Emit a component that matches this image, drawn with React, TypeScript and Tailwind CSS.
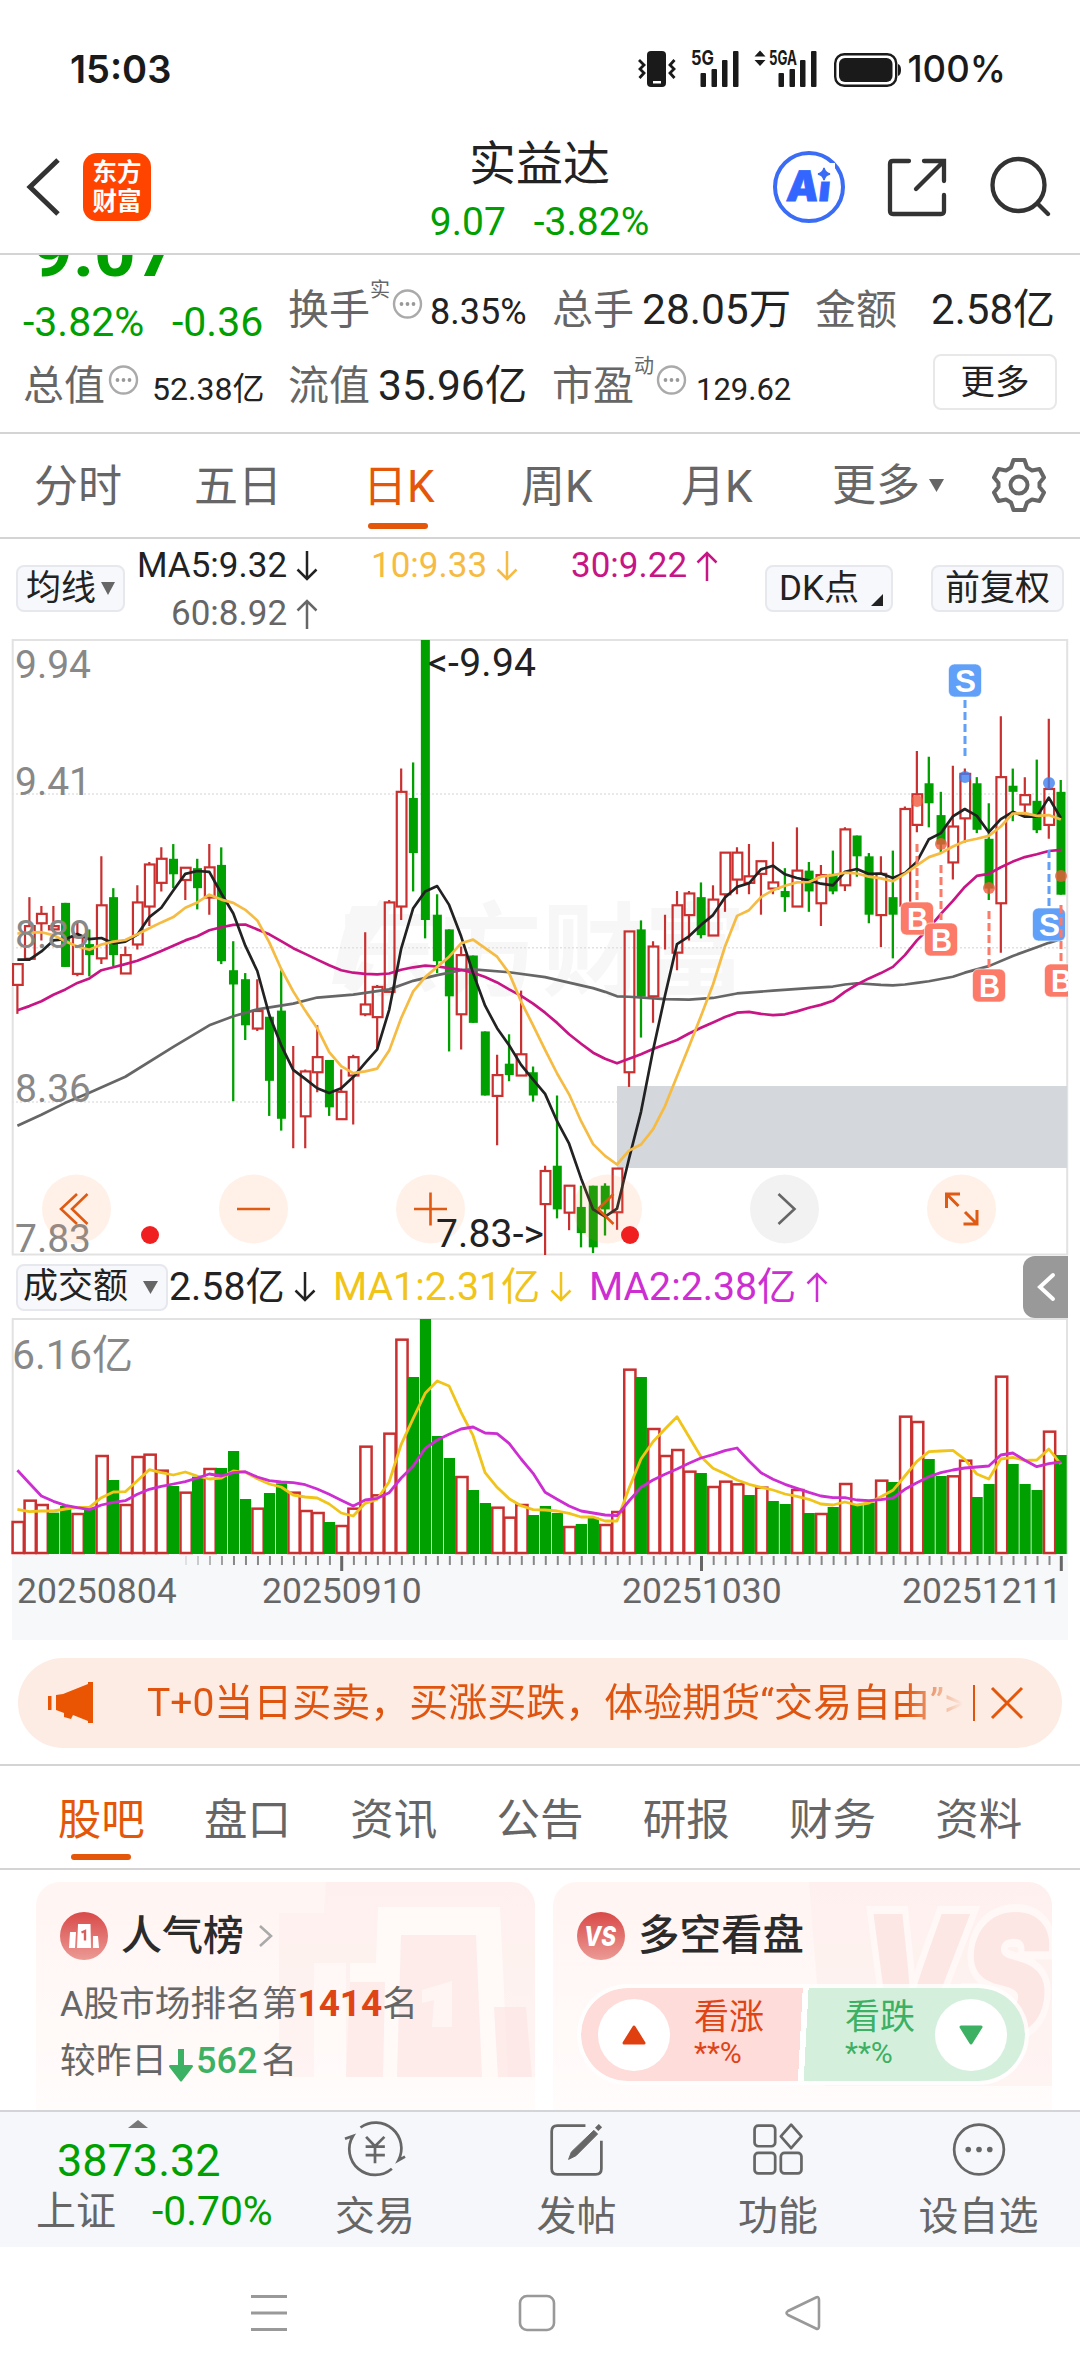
import type { ReactNode } from "react";

const UP = "#c93030";
const DOWN = "#00a000";
const FONT = "Roboto, 'Noto Sans CJK SC', sans-serif";

// [rising, high, body top, body bottom, low] in chart units: 24 is 9.94, 1531 is 7.83
const candles: number[][] = [
  [1, 818, 818, 869, 940], [1, 654, 725, 805, 805], [1, 676, 695, 718, 760], [1, 676, 725, 733, 740],
  [0, 668, 668, 825, 825], [1, 715, 752, 842, 848], [0, 733, 769, 796, 848], [1, 554, 674, 804, 818],
  [0, 632, 654, 796, 823], [1, 775, 796, 841, 841], [1, 625, 667, 770, 782], [1, 568, 574, 677, 725],
  [1, 532, 560, 619, 640], [0, 524, 560, 598, 632], [1, 580, 582, 612, 661], [0, 560, 583, 632, 684],
  [1, 524, 581, 655, 697], [0, 532, 575, 811, 818], [0, 762, 833, 868, 1154], [0, 840, 855, 968, 1004],
  [1, 855, 933, 976, 982], [0, 947, 947, 1104, 1190], [0, 833, 932, 1197, 1226], [1, 1019, 1176, 1176, 1269],
  [1, 1076, 1081, 1191, 1269], [1, 968, 1046, 1083, 1132], [0, 1053, 1053, 1169, 1190], [1, 1076, 1131, 1198, 1198],
  [1, 1040, 1046, 1091, 1211], [1, 740, 917, 941, 946], [1, 869, 874, 948, 1025], [1, 661, 667, 886, 886],
  [1, 339, 396, 677, 710], [0, 324, 411, 546, 640], [0, 24, 24, 710, 755], [0, 647, 697, 811, 840],
  [0, 733, 733, 897, 1032], [1, 775, 796, 941, 1027], [0, 797, 797, 962, 962], [0, 983, 983, 1140, 1140],
  [1, 1040, 1090, 1141, 1262], [0, 990, 1062, 1090, 1105], [1, 883, 1039, 1091, 1091], [0, 1069, 1083, 1140, 1155],
  [1, 1312, 1325, 1406, 1531], [0, 1140, 1312, 1419, 1441], [1, 1361, 1361, 1427, 1470], [0, 1361, 1413, 1477, 1512],
  [0, 1361, 1361, 1512, 1526], [0, 1355, 1361, 1419, 1483], [1, 1319, 1319, 1426, 1469], [1, 738, 738, 1083, 1119],
  [0, 711, 733, 898, 998], [1, 762, 775, 897, 962], [1, 697, 762, 762, 782], [1, 639, 674, 790, 833],
  [1, 639, 645, 698, 760], [0, 618, 654, 747, 755], [1, 625, 660, 748, 748], [1, 545, 545, 647, 690],
  [1, 532, 545, 611, 647], [1, 524, 603, 619, 647], [1, 566, 566, 597, 697], [1, 518, 618, 633, 647],
  [0, 583, 639, 654, 690], [1, 483, 589, 677, 677], [0, 568, 589, 640, 690], [1, 575, 600, 669, 725],
  [0, 540, 597, 640, 647], [1, 483, 488, 625, 639], [0, 503, 503, 554, 604], [0, 546, 554, 697, 718],
  [1, 554, 597, 698, 776], [0, 540, 654, 697, 804], [1, 432, 438, 675, 704], [1, 296, 402, 477, 495],
  [0, 310, 375, 424, 483], [0, 396, 453, 525, 546], [1, 332, 481, 569, 611], [1, 339, 352, 461, 520],
  [0, 360, 375, 489, 497], [0, 424, 511, 633, 661], [1, 211, 360, 669, 790], [0, 339, 381, 396, 468],
  [1, 360, 404, 427, 453], [0, 317, 418, 490, 497], [1, 217, 389, 477, 511], [0, 367, 396, 648, 648],
];

const ma5 = [
  807, 807, 787, 760, 757, 744, 757, 754, 767, 763, 746, 703, 680, 638, 597, 590, 592, 645, 694, 773, 835, 943,
  1017, 1077, 1099, 1122, 1134, 1122, 1095, 1060, 1027, 930, 780, 681, 640, 627, 673, 750, 840, 920, 975, 1017,
  1065, 1101, 1136, 1203, 1258, 1343, 1419, 1437, 1417, 1295, 1180, 1030, 895, 769, 750, 722, 698, 655, 629, 620,
  586, 577, 598, 607, 613, 621, 625, 592, 585, 597, 596, 607, 595, 567, 512, 497, 456, 438, 455, 495, 463, 445,
  457, 457, 410, 460,
];
const ma10 = [
  743, 741, 740, 747, 762, 775, 783, 770, 763, 759, 745, 730, 716, 703, 680, 667, 648, 660, 668, 685, 711, 765,
  830, 885, 932, 975, 1034, 1068, 1085, 1081, 1074, 1030, 950, 885, 850, 825, 800, 767, 758, 779, 800, 840, 910,
  968, 1028, 1086, 1137, 1203, 1259, 1288, 1309, 1275, 1260, 1223, 1166, 1093, 1020, 945, 868, 775, 700, 686, 654,
  637, 626, 618, 617, 604, 600, 594, 596, 604, 608, 615, 597, 576, 556, 546, 530, 517, 511, 504, 481, 449, 448,
  455, 453, 464,
];
const ma30 = [
  931, 921, 909, 893, 880, 864, 853, 833, 826, 818, 810, 798, 786, 773, 760, 750, 735, 728, 722, 721, 733, 745,
  762, 779, 793, 807, 821, 833, 839, 842, 843, 841, 832, 826, 822, 824, 828, 832, 839, 850, 863, 880, 896, 915,
  937, 962, 990, 1013, 1035, 1050, 1061, 1050, 1039, 1026, 1015, 1004, 988, 974, 961, 948, 937, 935, 940, 943,
  941, 934, 925, 918, 908, 886, 868, 853, 840, 825, 796, 760, 730, 695, 663, 629, 602, 597, 581, 567, 556, 549,
  541, 538,
];
// [day, value], the slow average barely bends
const ma60 = [
  [0, 1214], [2, 1187], [4, 1158], [6, 1133], [9, 1094], [13, 1021], [16, 968], [18, 946], [20, 929], [23, 915],
  [25, 900], [28, 893], [31, 880], [33, 859], [35, 845], [37, 833], [38, 831], [41, 838], [44, 850], [48, 877],
  [49, 886], [50, 897], [51, 898], [54, 904], [56, 905], [58, 901], [60, 890], [63, 883], [66, 877], [68, 873],
  [69, 868], [70, 865], [72, 869], [73, 870], [74, 868], [75, 864], [76, 860], [78, 849], [79, 839], [81, 823],
  [83, 798], [85, 777], [86, 766], [87, 757],
];

// [rising, bar top]: 207 is the 6.16亿 line, 910 the base line
const volumes: number[][] = [
  [1, 816], [1, 752], [1, 765], [0, 788], [0, 768], [1, 792], [0, 775], [1, 618], [0, 690], [1, 765], [1, 621],
  [1, 614], [1, 662], [0, 708], [1, 728], [0, 680], [1, 657], [0, 654], [0, 603], [0, 747], [1, 776], [0, 729],
  [0, 700], [1, 728], [1, 783], [1, 789], [0, 816], [1, 828], [1, 776], [1, 590], [1, 736], [1, 551], [1, 269],
  [0, 381], [0, 207], [0, 558], [0, 624], [1, 681], [0, 720], [0, 759], [1, 773], [1, 803], [1, 765], [0, 795],
  [0, 768], [0, 789], [1, 831], [0, 822], [0, 803], [1, 825], [1, 786], [1, 359], [0, 381], [1, 537], [1, 618],
  [1, 600], [1, 665], [0, 669], [1, 711], [1, 695], [1, 703], [0, 735], [1, 713], [0, 753], [0, 762], [1, 720],
  [0, 789], [1, 792], [0, 771], [1, 702], [0, 765], [0, 758], [1, 692], [0, 696], [1, 500], [1, 516], [0, 627],
  [0, 678], [1, 679], [1, 632], [0, 741], [0, 702], [1, 380], [0, 642], [0, 702], [0, 720], [1, 545], [0, 615],
];
const volMa1 = [
  778, 785, 783, 783, 777, 772, 772, 743, 726, 725, 692, 659, 668, 675, 666, 678, 687, 684, 663, 667, 686, 702,
  711, 735, 741, 744, 762, 789, 798, 760, 748, 695, 583, 505, 430, 393, 408, 487, 557, 668, 712, 746, 767, 779,
  780, 783, 790, 801, 801, 813, 813, 715, 627, 575, 537, 500, 560, 620, 655, 671, 690, 703, 712, 720, 732, 739,
  748, 762, 765, 756, 765, 759, 740, 721, 678, 634, 605, 603, 601, 628, 672, 687, 627, 622, 631, 630, 597, 642,
];
const volMa2 = [
  661, 700, 738, 754, 766, 773, 779, 765, 757, 752, 733, 718, 709, 702, 695, 684, 672, 678, 668, 665, 681, 692,
  696, 698, 704, 717, 733, 751, 768, 750, 745, 728, 684, 648, 595, 570, 553, 537, 531, 549, 551, 580, 627, 670,
  727, 748, 768, 783, 789, 795, 797, 753, 712, 690, 673, 657, 640, 624, 614, 602, 594, 633, 668, 688, 703, 715,
  727, 738, 743, 743, 750, 752, 749, 744, 718, 698, 680, 668, 660, 654, 651, 648, 615, 609, 631, 650, 641, 636,
];

const cx = (i: number) => 17.4 + i * 11.993;
const priceY = (v: number) => (v - 24) / 2.45 + 1;
const volY = (v: number) => (v - 207) / 3 + 1;
const toPoints = (values: number[], y: (v: number) => number) =>
  values.map((v, i) => `${cx(i).toFixed(1)},${y(v).toFixed(1)}`).join(" ");

function Arrow({ up = false, color, className = "" }: { up?: boolean; color: string; className?: string }) {
  return (
    <svg width="22" height="30" viewBox="0 0 22 30" className={`shrink-0 ${className}`}>
      <path
        d={up ? "M11 30V2M1.500 11.500L11 2L20.500 11.500" : "M11 0V28M1.500 18.500L11 28L20.500 18.500"}
        fill="none"
        stroke={color}
        strokeWidth="2.500"
      />
    </svg>
  );
}

function Caret({ w = 14, h = 13 }: { w?: number; h?: number }) {
  return (
    <svg width={w} height={h} viewBox="0 0 14 13" preserveAspectRatio="none" className="shrink-0">
      <path d="M0 0H14L7 13Z" fill="#666" />
    </svg>
  );
}

function InfoDots() {
  return (
    <svg width="31" height="30" viewBox="0 0 31 30" className="shrink-0 self-start mt-[9px]">
      <circle cx="15.500" cy="15" r="13.500" fill="none" stroke="#aaa" strokeWidth="2.400" />
      <circle cx="9.500" cy="15" r="1.900" fill="#999" />
      <circle cx="15.500" cy="15" r="1.900" fill="#999" />
      <circle cx="21.500" cy="15" r="1.900" fill="#999" />
    </svg>
  );
}

function StatusBar() {
  const bars = [
    [0, 22], [11, 18], [21.5, 9], [32.5, 0],
  ];
  return (
    <div className="h-[137px] flex items-center pl-[70px] pr-[74px] pt-[1px] font-['Inter',sans-serif] font-semibold text-[38px] text-[#1a1a1a]">
      <span className="flex-1">15:03</span>
      <svg width="270" height="40" viewBox="636 49 270 40" fill="#1a1a1a">
        <rect x="647" y="51" width="19" height="36" rx="4" />
        <rect x="653" y="81" width="8" height="2.500" fill="#fff" />
        <path d="M639 60L644 65L640 69L644 73L639.500 78M674.500 60L670 65L674 69L670 73L674.500 78" fill="none" stroke="#1a1a1a" strokeWidth="2.800" />
        <text x="691" y="65" fontSize="20" fontWeight="700" textLength="23" lengthAdjust="spacingAndGlyphs">5G</text>
        {bars.map(([x, y]) => (
          <rect key={x} x={700.5 + x} y={51 + y} width="5.500" height={36 - y} rx="1" />
        ))}
        <path d="M760 50.500L765.500 56.500H754.500ZM760 66L765.500 60H754.500Z" />
        <text x="769" y="65" fontSize="20" fontWeight="700" textLength="28" lengthAdjust="spacingAndGlyphs">5GA</text>
        {bars.map(([x, y]) => (
          <rect key={x} x={778.5 + x} y={51 + y} width="5.500" height={36 - y} rx="1" />
        ))}
        <rect x="835.200" y="54.200" width="61" height="31.600" rx="9" fill="none" stroke="#1a1a1a" strokeWidth="2.400" />
        <rect x="839" y="58" width="53.500" height="24" rx="6" />
        <path d="M898 64Q901 65 901 70Q901 75 898 76Z" />
      </svg>
      <span className="text-[36.500px] font-medium ml-[1px]">100%</span>
    </div>
  );
}

function Header() {
  return (
    <header className="h-[118px] border-b-2 border-[#d4d4d4] flex items-center">
      <svg width="36" height="60" viewBox="0 0 36 60" className="ml-[25px] mt-[-16px]">
        <path d="M33 3L5 30L33 57" fill="none" stroke="#333" strokeWidth="5" />
      </svg>
      <div className="ml-[22px] mt-[-16px] size-[68px] rounded-[14px] bg-[#ff4400] text-white font-bold text-[24.500px] leading-[29px] flex flex-col items-center justify-center">
        <span>东方</span>
        <span>财富</span>
      </div>
      <div className="flex-1 self-stretch text-center pl-[156px]">
        <h1 className="pt-[1px] text-[47px] leading-[52px] text-[#222]">实益达</h1>
        <div className="mt-[2px] text-[39px] leading-[60px] text-[#00a000] flex justify-center">
          <span>9.07</span>
          <span className="ml-[28px]">-3.82%</span>
        </div>
      </div>
      <div className="flex items-center mt-[-16px] mr-[29px]">
        <svg width="74" height="74" viewBox="772 150 74 74">
          <circle cx="809" cy="187" r="34" fill="none" stroke="#3a6cf5" strokeWidth="4" />
          <g transform="translate(785.500 201) skewX(-6)" fontFamily="Inter, sans-serif" fontWeight="900" fontSize="42" fill="#3366ff" stroke="#3366ff" strokeWidth="0.800">
            <text textLength="44" lengthAdjust="spacingAndGlyphs">Ai</text>
          </g>
          <rect x="816" y="163" width="19" height="18.500" fill="#fff" />
          <path d="M824 168Q825 173 830 174Q825 175 824 180Q823 175 818 174Q823 173 824 168Z" fill="#3a6cf5" stroke="#3a6cf5" strokeWidth="1.500" />
        </svg>
        <svg width="62" height="62" viewBox="0 0 62 62" className="ml-[39px]" fill="none" stroke="#333" strokeWidth="4.300" strokeLinecap="round">
          <path d="M24 5H8Q5 5 5 8V55Q5 58 8 58H56Q59 58 59 55V39" />
          <path d="M39 5H59V25M58 6L31 33" />
        </svg>
        <svg width="62" height="62" viewBox="0 0 62 62" className="ml-[42px]" fill="none" stroke="#333" strokeWidth="4.300" strokeLinecap="round">
          <circle cx="29.500" cy="29" r="26" />
          <path d="M49 48L59 58" />
        </svg>
      </div>
    </header>
  );
}

function Quote() {
  return (
    <section className="h-[179px] border-b-2 border-[#d4d4d4] overflow-hidden text-[41px] leading-[60px] text-[#222]">
      <div className="flex h-[101px] pl-[23px]">
        <div className="w-[265px] mt-[-34px] text-[#00a000]">
          <div className="h-[71px] pl-[8px] text-[73px] font-bold">9.07</div>
          <div className="text-[41px] flex">
            <span className="w-[149px]">-3.82%</span>
            <span>-0.36</span>
          </div>
        </div>
        <div className="w-[264px] pt-[25px] flex items-baseline">
          <span className="text-[#666]">换手</span>
          <span className="text-[#666] text-[20px] leading-[20px] self-start mr-[2px]">实</span>
          <InfoDots />
          <span className="ml-[7px] text-[36px]">8.35%</span>
        </div>
        <div className="w-[263px] pt-[25px] flex items-baseline">
          <span className="text-[#666]">总手</span>
          <span className="ml-[8px] text-[42.500px]">28.05万</span>
        </div>
        <div className="w-[240px] pt-[25px] flex items-baseline justify-between">
          <span className="text-[#666]">金额</span>
          <span className="text-[42px]">2.58亿</span>
        </div>
      </div>
      <div className="flex h-[60px] pl-[23px]">
        <div className="w-[265px] flex items-baseline">
          <span className="text-[#666]">总值</span>
          <span className="flex self-start ml-[3px]"><InfoDots /></span>
          <span className="ml-[13px] text-[32px]">52.38亿</span>
        </div>
        <div className="w-[264px] flex items-baseline">
          <span className="text-[#666]">流值</span>
          <span className="ml-[8px] text-[42.500px]">35.96亿</span>
        </div>
        <div className="w-[381px] flex items-baseline">
          <span className="text-[#666]">市盈</span>
          <span className="text-[#666] text-[20px] leading-[20px] self-start mr-[2px]">动</span>
          <InfoDots />
          <span className="ml-[9px] text-[31px]">129.62</span>
        </div>
        <button className="w-[124px] h-[56px] border-2 border-[#e8e8e8] rounded-[8px] text-[34.500px] leading-[50px] mt-[-2px]">更多</button>
      </div>
    </section>
  );
}

function PeriodTabs() {
  const tabs = [
    ["分时", "w-[160px]"],
    ["五日", "w-[169px]"],
    ["日K", "w-[158px] text-[#e4570b]"],
    ["周K", "w-[160px]"],
    ["月K", "w-[151px]"],
  ];
  return (
    <nav className="h-[105px] border-b-2 border-[#d4d4d4] flex text-[44px] leading-[106px] text-[#666] pl-[34px]">
      {tabs.map(([label, className]) => (
        <div key={label} className={className}>
          {label}
          {label === "日K" && <div className="w-[60px] h-[6px] rounded-full bg-[#e4570b] mt-[-17px] ml-[5px]" />}
        </div>
      ))}
      <div className="flex items-center w-[156px]">
        <span className="mr-[9px]">更多</span>
        <Caret w={15} />
      </div>
      <svg width="56" height="56" viewBox="0 0 56 56" className="self-center ml-[3px] mt-[-1px]">
        <path
          d="M22.500 3H33.500L36 10.500L41 13.500L48.500 12L53 20.500L48.500 26V30L53 35.500L48.500 44L41 42.500L36 45.500L33.500 53H22.500L20 45.500L15 42.500L7.500 44L3 35.500L7.500 30V26L3 20.500L7.500 12L15 13.500L20 10.500Z"
          fill="none"
          stroke="#666"
          strokeWidth="4"
          strokeLinejoin="round"
        />
        <circle cx="28" cy="28" r="8.500" fill="none" stroke="#666" strokeWidth="4" />
      </svg>
    </nav>
  );
}

function ChipButton({ className, children }: { className: string; children: ReactNode }) {
  return (
    <button className={`h-[47px] rounded-[8px] border-2 border-[#e6e8ee] bg-[#f7f8fb] text-[35px] leading-[42px] text-[#222] flex items-center shrink-0 ${className}`}>
      {children}
    </button>
  );
}

function MaRow() {
  return (
    <div className="h-[100px] flex pl-[16px] pr-[15px] text-[35px]">
      <ChipButton className="w-[109px] mt-[26px] pl-[8px] gap-[5px]">
        均线
        <Caret />
      </ChipButton>
      <div className="ml-[12px] w-[628px] leading-[48px] pt-[3px]">
        <div className="flex items-center">
          <span className="w-[159px] text-[#222]">MA5:9.32</span>
          <Arrow color="#222" />
          <span className="ml-[53px] w-[125px] text-[#f6bb42]">10:9.33</span>
          <Arrow color="#f6bb42" />
          <span className="ml-[53px] w-[125px] text-[#c71585]">30:9.22</span>
          <Arrow up color="#c71585" />
        </div>
        <div className="flex items-center text-[#666]">
          <span className="w-[159px] pl-[34px]">60:8.92</span>
          <Arrow up color="#666" />
        </div>
      </div>
      <ChipButton className="w-[128px] mt-[26px] pl-[12px]">
        DK点
        <svg width="12" height="12" viewBox="0 0 12 12" className="self-end mb-[4px] ml-[12px]">
          <path d="M12 0V12H0Z" fill="#222" />
        </svg>
      </ChipButton>
      <ChipButton className="w-[133px] mt-[26px] ml-[38px] justify-center">前复权</ChipButton>
    </div>
  );
}

// [letter, center x, top of the box, dash start, dash end]
const marks: [string, number, number, number, number][] = [
  ["S", 965, 664, 700, 757],
  ["B", 917, 902, 844, 900],
  ["B", 941, 923, 865, 920],
  ["B", 989, 969, 911, 967],
  ["S", 1049, 908, 850, 906],
  ["B", 1061, 964, 905, 961],
];
const markDots: [string, number, number][] = [
  ["#3d7ff0", 965, 777], ["#3d7ff0", 1049, 783],
  ["#f05a3c", 917, 801], ["#f05a3c", 941, 844], ["#f05a3c", 989, 888], ["#f05a3c", 1061, 876],
];

function PriceChart() {
  return (
    <svg width="1080" height="617" viewBox="0 0 1080 617" fontFamily={FONT} className="block">
      <defs>
        <clipPath id="plot">
          <rect x="12" y="0" width="1056" height="617" />
        </clipPath>
      </defs>
      <g fill="#f7f7f7" fontSize="102" fontWeight="700">
        <path d="M352 267Q340 300 332 345H352Q362 300 385 267Z" />
        <text x="338" y="349">东方财富</text>
      </g>
      {[401, 778, 1156].map((v) => (
        <path key={v} d={`M12 ${priceY(v)}H1068`} stroke="#e2e2e2" strokeWidth="1.500" strokeDasharray="2 2" />
      ))}
      <rect x="12.700" y="1" width="1054.500" height="614.500" fill="none" stroke="#e2e2e2" strokeWidth="2" />
      <rect x="617" y="447" width="450" height="82" fill="#d4d8dd" />

      <g clipPath="url(#plot)">
        {candles.map(([up, high, top, bottom, low], i) => {
          const x = cx(i);
          const color = up ? UP : DOWN;
          if (!up) {
            return (
              <g key={i} fill={color}>
                <rect x={x - 1.2} y={priceY(high)} width="2.300" height={priceY(low) - priceY(high)} />
                <rect x={x - 4.3} y={priceY(top)} width="9" height={priceY(bottom) - priceY(top)} />
              </g>
            );
          }
          return (
            <g key={i} stroke={color} strokeWidth="2.200" fill="none">
              <path d={`M${x} ${priceY(high)}V${priceY(top)}M${x} ${priceY(bottom)}V${priceY(low)}`} />
              <rect x={x - 4.4} y={priceY(top)} width="9.700" height={priceY(bottom) - priceY(top)} />
            </g>
          );
        })}
        <g fill="none" strokeWidth="2.700" strokeLinejoin="round">
          <polyline points={ma60.map(([i, v]) => `${cx(i)},${priceY(v)}`).join(" ")} stroke="#666" />
          <polyline points={toPoints(ma30, priceY)} stroke="#c71585" />
          <polyline points={toPoints(ma5, priceY)} stroke="#222" />
          <polyline points={toPoints(ma10, priceY)} stroke="#f6bb42" />
        </g>
        <g transform="translate(0 -639)">
          {markDots.map(([color, x, y]) => (
            <circle key={`${x}-${y}`} cx={x} cy={y} r="6" fill={color} opacity="0.8" />
          ))}
          {marks.map(([letter, x, top, from, to]) => {
            const color = letter === "S" ? "#60a0f8" : "#fb7b68";
            return (
              <g key={x}>
                <path d={`M${x} ${from}V${to}`} stroke={color} strokeWidth="3" strokeDasharray="8 4" />
                <rect x={x - 16.5} y={top} width="33" height="33" rx="6" fill={color} stroke="#fff" strokeOpacity="0.6" />
                <text x={x - 10} y={top + 27.5} fontSize="31" fontWeight="700" fontFamily="Liberation Sans, sans-serif" fill="#fff" textLength="21" lengthAdjust="spacingAndGlyphs">
                  {letter}
                </text>
              </g>
            );
          })}
        </g>
      </g>

      <g fontSize="39" fill="#888">
        <text x="15" y="39">9.94</text>
        <text x="15" y="156">9.41</text>
        <text x="15" y="309">8.89</text>
        <text x="15" y="463">8.36</text>
        <text x="15" y="613">7.83</text>
      </g>

      <g transform="translate(0 570)">
        {[76.5, 253.5, 430.5, 607.5, 961.5].map((x) => (
          <circle key={x} cx={x} cy="0" r="34.500" fill="#ff8a50" fillOpacity="0.13" />
        ))}
        <circle cx="784.500" cy="0" r="34.500" fill="#f2f2f2" />
        <g fill="none" stroke="#df5a12" strokeWidth="2.600">
          <path d="M77 -15L61 0L77 15M87.500 -15L72 0L87.500 15" />
          <path d="M237 0H270" />
          <path d="M414 0H447M430.500 -16.500V16.500" />
          <path d="M613.500 -15L598 0L613.500 15" />
          <path d="M960 -15H946.500V-1M946.500 -15L958.500 -3M963.500 15H977V1M977 15L965 3" strokeWidth="3" />
        </g>
        <path d="M778.500 -15L794.500 0L778.500 15" fill="none" stroke="#666" strokeWidth="2.600" />
        <circle cx="150" cy="26" r="9" fill="#f02020" />
        <circle cx="630" cy="26" r="9" fill="#f02020" />
      </g>
      <g fontSize="39" fill="#222">
        <text x="428" y="37" textLength="108">&lt;-9.94</text>
        <text x="436" y="608" textLength="108">7.83-&gt;</text>
      </g>
    </svg>
  );
}

function VolumeRow() {
  return (
    <div className="h-[62px] flex items-center pl-[16px] pr-[12px] text-[39.200px] leading-[60px]">
      <ChipButton className="w-[152px] pl-[5px] gap-[15px]">
        成交额
        <Caret w={15} />
      </ChipButton>
      <span className="ml-[1px] w-[125px] whitespace-nowrap text-[#222]">2.58亿</span>
      <Arrow color="#222" />
      <span className="ml-[17px] w-[217px] whitespace-nowrap text-[#f0c419]">MA1:2.31亿</span>
      <Arrow color="#f0c419" />
      <span className="ml-[17px] w-[217px] whitespace-nowrap text-[#cc2ed1]">MA2:2.38亿</span>
      <Arrow up color="#cc2ed1" />
      <div className="ml-auto w-[45px] h-[62px] rounded-l-[12px] bg-[#999] flex items-center justify-center">
        <svg width="20" height="30" viewBox="0 0 20 30">
          <path d="M17 3L4 15L17 27" fill="none" stroke="#fff" strokeWidth="4" strokeLinecap="round" />
        </svg>
      </div>
    </div>
  );
}

function VolumeChart() {
  return (
    <svg width="1080" height="322" viewBox="0 0 1080 322" fontFamily={FONT} className="block">
      <rect x="12" y="236" width="1056" height="86" fill="#f7f8fa" />
      <path d="M12.700 236V1H1067V236" fill="none" stroke="#e2e2e2" strokeWidth="2" />
      <text x="12" y="50.500" fontSize="41" fill="#888">6.16亿</text>
      {volumes.map(([up, top], i) => {
        const x = cx(i);
        return up ? (
          <rect key={i} x={x - 4.8} y={volY(top)} width="11.200" height={235 - volY(top)} fill="#fff" stroke={UP} strokeWidth="2.500" />
        ) : (
          <rect key={i} x={x - 5.3} y={volY(top)} width="11.200" height={236 - volY(top)} fill={DOWN} />
        );
      })}
      <g fill="none" strokeWidth="2.800" strokeLinejoin="round">
        <polyline points={toPoints(volMa1, volY)} stroke="#f0c419" />
        <polyline points={toPoints(volMa2, volY)} stroke="#cc2ed1" />
      </g>
      {volumes.map((_, i) => {
        if (i < 14) return null;
        const major = i === 27 || i === 57 || i === 87;
        return (
          <rect
            key={i}
            x={cx(i) - (major ? 1 : 0.3)}
            y="238"
            width={major ? 3 : 2}
            height={major ? 15 : 9}
            fill={major ? "#666" : "#888"}
            opacity={Math.min(1, (i - 13) / 5)}
          />
        );
      })}
      <g fontSize="35.500" fill="#666">
        <text x="17" y="285">20250804</text>
        <text x="262" y="285">20250910</text>
        <text x="622" y="285">20251030</text>
        <text x="902" y="285">20251211</text>
      </g>
    </svg>
  );
}

function Notice() {
  return (
    <div className="h-[126px] pt-[18px] px-[18px] border-b-2 border-[#d4d4d4]">
      <div className="h-[90px] rounded-full bg-[#fdece3] flex items-center text-[#df5510]">
        <svg width="46" height="42" viewBox="0 0 46 42" className="ml-[29px] shrink-0">
          <path d="M1 14H4.500V28H1ZM9 13L16 12L41 2V0H46V41H41V39L26 33L24 37L17 35V31L9 28Z" fill="#ea5504" />
        </svg>
        <div className="ml-[54px] w-[816px] overflow-hidden whitespace-nowrap text-[39px] leading-[60px] mask-r-from-93% mask-r-to-100%">
          T+0当日买卖，买涨买跌，体验期货“交易自由”&gt;
        </div>
        <div className="ml-[10px] w-[2px] h-[36px] bg-[#df5510]" />
        <svg width="34" height="34" viewBox="0 0 34 34" className="ml-[15px]">
          <path d="M2 2L32 32M32 2L2 32" stroke="#e4570b" strokeWidth="3" />
        </svg>
      </div>
    </div>
  );
}

function SectionTabs() {
  const tabs = ["股吧", "盘口", "资讯", "公告", "研报", "财务", "资料"];
  return (
    <nav className="h-[104px] border-b-2 border-[#d4d4d4] grid grid-cols-7 px-[28px] text-[43.500px] leading-[109px] text-center text-[#666]">
      {tabs.map((t, i) => (
        <div key={t} className={i === 0 ? "text-[#e4570b]" : ""}>
          {t}
          {i === 0 && <div className="w-[60px] h-[6px] mx-auto mt-[-21px] rounded-full bg-[#e4570b]" />}
        </div>
      ))}
    </nav>
  );
}

function RankCard() {
  return (
    <div className="relative w-[499px] h-[260px] rounded-t-[24px] overflow-hidden bg-linear-to-b from-[#fff5f3] to-[#fffdfc] text-[#666]">
      <svg width="499" height="228" viewBox="0 0 499 228" className="absolute inset-0">
        <path d="M290 0H499V195H310V81H278V195H243V31H288Z" fill="#fdebe9" opacity="0.450" />
        <path d="M342 25H464L472 195H310L314 100V81H340Z" fill="#fffaf8" />
        <path d="M365 53H440L446 195H361ZM314 100H349L347 195H310ZM458 125H490L496 195H462Z" fill="#fce6e4" opacity="0.700" />
        <path d="M386 108L416 99V145H396L398 118L386 121Z" fill="#fff6f4" />
      </svg>
      <div className="relative pl-[24px]">
        <div className="flex items-center pt-[24px] leading-[60px]">
          <svg width="48" height="48" viewBox="0 0 48 48">
            <defs>
              <linearGradient id="badge" x1="0" y1="0" x2="0" y2="1">
                <stop offset="0" stopColor="#d84a48" />
                <stop offset="1" stopColor="#ec9a95" />
              </linearGradient>
            </defs>
            <circle cx="24" cy="24" r="24" fill="url(#badge)" />
            <path d="M18 12H30.500L31 36H17ZM10 20H16L15 36H9ZM33 24H38L39 36H33Z" fill="#fff" />
            <path d="M21.500 20.500L25 19V28.500" fill="none" stroke="#d8605c" strokeWidth="2.400" />
          </svg>
          <span className="ml-[13px] text-[41px] font-medium text-[#2b2b2b]">人气榜</span>
          <svg width="16" height="24" viewBox="0 0 16 24" className="ml-[14px]">
            <path d="M2 2L13 12L2 22" fill="none" stroke="#aaa" strokeWidth="2.600" />
          </svg>
        </div>
        <div className="mt-[10px] text-[35.700px] leading-[56px]">
          A股市场排名第<span className="font-bold text-[37px] text-[#df4416]">1414</span>名
        </div>
        <div className="flex items-center text-[35.700px] leading-[58px]">
          较昨日
          <svg width="26" height="34" viewBox="0 0 26 34" className="ml-[1px] mt-[7px]">
            <path d="M10 1H16V17H24Q26 18 24 20L14 33Q13 34 12 33L2 20Q0 18 2 17H10Z" fill="#3cb063" />
          </svg>
          <span className="ml-[2px] mr-[4px] font-medium text-[36px] text-[#3cb063]">562</span>名
        </div>
      </div>
    </div>
  );
}

function VoteCard() {
  return (
    <div className="relative w-[499px] h-[260px] rounded-t-[24px] overflow-hidden bg-linear-to-b from-[#fff5f3] to-[#fffdfc]">
      <svg width="499" height="228" viewBox="0 0 499 228" className="absolute inset-0">
        <path d="M256 0H499V204H272Z" fill="#fdeae8" opacity="0.450" />
        <text x="308" y="152" fontFamily="Inter, sans-serif" fontStyle="italic" fontWeight="900" fontSize="165" fill="#fce7e4" stroke="#fff8f6" strokeWidth="16" paintOrder="stroke" textLength="188" lengthAdjust="spacingAndGlyphs">VS</text>
      </svg>
      <div className="relative">
        <div className="flex items-center pt-[24px] pl-[24px] leading-[60px]">
          <svg width="48" height="48" viewBox="0 0 48 48">
            <circle cx="24" cy="24" r="24" fill="url(#badge)" />
            <text x="23" y="34" fontFamily="Inter, sans-serif" fontStyle="italic" fontWeight="800" fontSize="27" fill="#fff" textAnchor="middle" textLength="32" lengthAdjust="spacingAndGlyphs">VS</text>
          </svg>
          <span className="ml-[13px] text-[41.500px] font-medium text-[#2b2b2b]">多空看盘</span>
        </div>
        <div className="ml-[24px] mt-[18px] w-[452px] h-[101px] rounded-full border-4 border-white/80 bg-[linear-gradient(93deg,#fddcd9_49.4%,#fff_49.4%,#fff_50.7%,#d5efdd_50.7%)] bg-clip-padding flex items-center">
          <div className="ml-[17px] size-[72px] rounded-full bg-white flex items-center justify-center">
            <svg width="24" height="20" viewBox="0 0 24 20">
              <path d="M12 2L22 18H2Z" fill="#e04010" stroke="#e04010" strokeWidth="3" strokeLinejoin="round" />
            </svg>
          </div>
          <div className="ml-[24px] text-[#df4416] text-[35px] leading-[37px]">
            <div>看涨</div>
            <div className="text-[30px] leading-[34px]">**%</div>
          </div>
          <div className="ml-[81px] text-[#3cb063] text-[35px] leading-[37px]">
            <div>看跌</div>
            <div className="text-[30px] leading-[34px]">**%</div>
          </div>
          <div className="ml-[20px] size-[72px] rounded-full bg-white flex items-center justify-center">
            <svg width="24" height="20" viewBox="0 0 24 20">
              <path d="M12 18L22 2H2Z" fill="#3cb063" stroke="#3cb063" strokeWidth="3" strokeLinejoin="round" />
            </svg>
          </div>
        </div>
      </div>
    </div>
  );
}

function Action({ label, className, children }: { label: string; className: string; children: ReactNode }) {
  return (
    <div className={`flex flex-col items-center pt-[8px] ${className}`}>
      <svg width="66" height="64" viewBox="0 0 66 64" fill="none" stroke="#666" strokeWidth="2.900">
        {children}
      </svg>
      <span className="mt-[7px] leading-[60px] whitespace-nowrap">{label}</span>
    </div>
  );
}

function BottomBar() {
  return (
    <footer className="h-[137px] border-t-2 border-[#d2d4d8] bg-[#f6f7fa] flex text-[40px] text-[#666]">
      <div className="w-[275px] pt-[8px]">
        <svg width="20" height="8" viewBox="0 0 20 8" className="ml-[128px] block">
          <path d="M10 0L20 8H0Z" fill="#777" />
        </svg>
        <div className="pl-[57px] mt-[8px] text-[45px] leading-[50px] text-[#00a000]">3873.32</div>
        <div className="flex items-baseline pl-[36px] leading-[50px]">
          <span>上证</span>
          <span className="ml-[36px] text-[#00a000] text-[40.800px]">-0.70%</span>
        </div>
      </div>
      <Action label="交易" className="w-[200px]">
        <path d="M17.500 8A27.500 27.500 0 0 1 58 43L65 39M51 52A27.500 27.500 0 0 1 9.500 17L1 20" />
        <path d="M23.500 18L33 28L43 18M33 28V46M23 28.500H43.500M23 37.500H43.500" />
      </Action>
      <Action label="发帖" className="w-[203px]">
        <path d="M42 6H12Q6 6 6 12V52Q6 58 12 58H53Q59 58 59 52V22" />
        <path d="M24 42L27 34L51 11L55 15L32 38Z" fill="#666" strokeWidth="1" />
        <path d="M54 10L58 6" strokeWidth="5" />
      </Action>
      <Action label="功能" className="w-[200px]">
        <rect x="8" y="6" width="22" height="22" rx="4" />
        <rect x="8" y="35" width="22" height="22" rx="4" />
        <rect x="36" y="35" width="22" height="22" rx="4" />
        <path d="M47 5L58 17.500L47 30L36 17.500Z" strokeLinejoin="round" />
      </Action>
      <Action label="设自选" className="w-[201px]">
        <circle cx="33" cy="31.500" r="26.500" />
        <g fill="#666" stroke="none">
          <circle cx="21.500" cy="31.500" r="3" />
          <circle cx="33" cy="31.500" r="3" />
          <circle cx="44.500" cy="31.500" r="3" />
        </g>
      </Action>
    </footer>
  );
}

function SystemNav() {
  return (
    <div className="h-[131px] flex items-center pl-[250px]">
      <svg width="38" height="40" viewBox="0 0 38 40">
        <path d="M1 3.500H37M1 20H37M1 36.500H37" stroke="#999" strokeWidth="3" />
      </svg>
      <svg width="40" height="40" viewBox="0 0 40 40" className="ml-[229px]">
        <rect x="3" y="3" width="34" height="34" rx="7" fill="none" stroke="#999" strokeWidth="2.600" />
      </svg>
      <svg width="40" height="40" viewBox="0 0 40 40" className="ml-[226px]">
        <path d="M33 4.500Q36 3 36 7V33Q36 37 33 35.500L5 22Q2 20 5 18Z" fill="none" stroke="#999" strokeWidth="2.600" />
      </svg>
    </div>
  );
}

export default function App() {
  return (
    <main className="w-[1080px] h-[2378px] overflow-hidden bg-white font-['Roboto','Noto_Sans_CJK_SC',sans-serif]">
      <StatusBar />
      <Header />
      <Quote />
      <PeriodTabs />
      <MaRow />
      <PriceChart />
      <VolumeRow />
      <VolumeChart />
      <Notice />
      <SectionTabs />
      <div className="h-[240px] pt-[12px] pl-[36px] pr-[28px] flex justify-between overflow-hidden">
        <RankCard />
        <VoteCard />
      </div>
      <BottomBar />
      <SystemNav />
    </main>
  );
}
